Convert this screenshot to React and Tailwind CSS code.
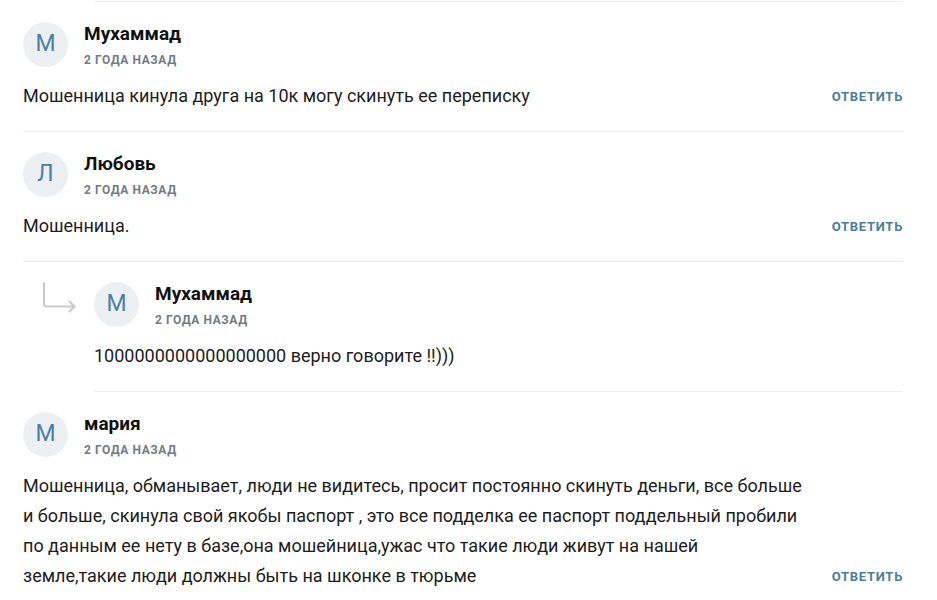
import React from 'react';

const comments = [
  {
    id: 1,
    name: 'Мухаммад',
    letter: 'М',
    text: 'Мошенница кинула друга на 10к могу скинуть ее переписку',
  },
  {
    id: 2,
    name: 'Любовь',
    letter: 'Л',
    text: 'Мошенница.',
    replies: [
      {
        id: 3,
        name: 'Мухаммад',
        letter: 'М',
        text: '1000000000000000000 верно говорите !!)))',
      },
    ],
  },
  {
    id: 4,
    name: 'мария',
    letter: 'М',
    text: 'Мошенница, обманывает, люди не видитесь, просит постоянно скинуть деньги, все больше и больше, скинула свой якобы паспорт , это все подделка ее паспорт поддельный пробили по данным ее нету в базе,она мошейница,ужас что такие люди живут на нашей земле,такие люди должны быть на шконке в тюрьме',
  },
];

const Header = ({ name, letter }) => (
  <div className="flex items-center gap-4">
    <div className="w-[45px] h-[45px] rounded-full bg-[#edf0f3] flex items-center justify-center text-[23px] text-[#4b7fa5] shrink-0">
      {letter}
    </div>
    <div className="flex flex-col">
      <span className="text-[19px] leading-[24px] font-bold text-[#111]">{name}</span>
      <span className="mt-[7px] text-[12px] leading-[14px] font-bold uppercase tracking-[0.6px] text-[#727b84]">
        2 года назад
      </span>
    </div>
  </div>
);

const ReplyArrow = () => (
  <svg width="36" height="34" viewBox="0 0 36 34" fill="none" stroke="#c6cacd" strokeWidth="2" strokeLinecap="round" strokeLinejoin="round">
    <path d="M3 2v21a2.5 2.5 0 0 0 2.5 2.5H33" />
    <path d="M28.5 20.5l5 5-5 5" />
  </svg>
);

export default function App() {
  return (
    <div className="w-[880px] ml-[23px] bg-white text-[#1c1c1c]" style={{ fontFamily: 'Roboto, "Noto Sans", sans-serif' }}>
      <div className="h-px mt-px ml-[71px] bg-[#ececec]"></div>
      {comments.map((c) => (
        <React.Fragment key={c.id}>
          <div className="pt-5 pb-5 border-b border-[#ececec]">
            <Header name={c.name} letter={c.letter} />
            <div className="mt-[14px] flex items-end justify-between gap-6">
              <p className="max-w-[780px] text-[18px] leading-[30px]">{c.text}</p>
              <button className="shrink-0 text-[13px] leading-[28px] font-bold uppercase tracking-[0.7px] text-[#4e7d9b]">
                Ответить
              </button>
            </div>
          </div>
          {c.replies &&
            c.replies.map((r) => (
              <div key={r.id} className="flex">
                <div className="w-[71px] shrink-0 pl-[18px] pt-[19px]">
                  <ReplyArrow />
                </div>
                <div className="flex-1 pt-5 pb-5 border-b border-[#ececec]">
                  <Header name={r.name} letter={r.letter} />
                  <p className="mt-[14px] text-[18px] leading-[30px]">{r.text}</p>
                </div>
              </div>
            ))}
        </React.Fragment>
      ))}
    </div>
  );
}
